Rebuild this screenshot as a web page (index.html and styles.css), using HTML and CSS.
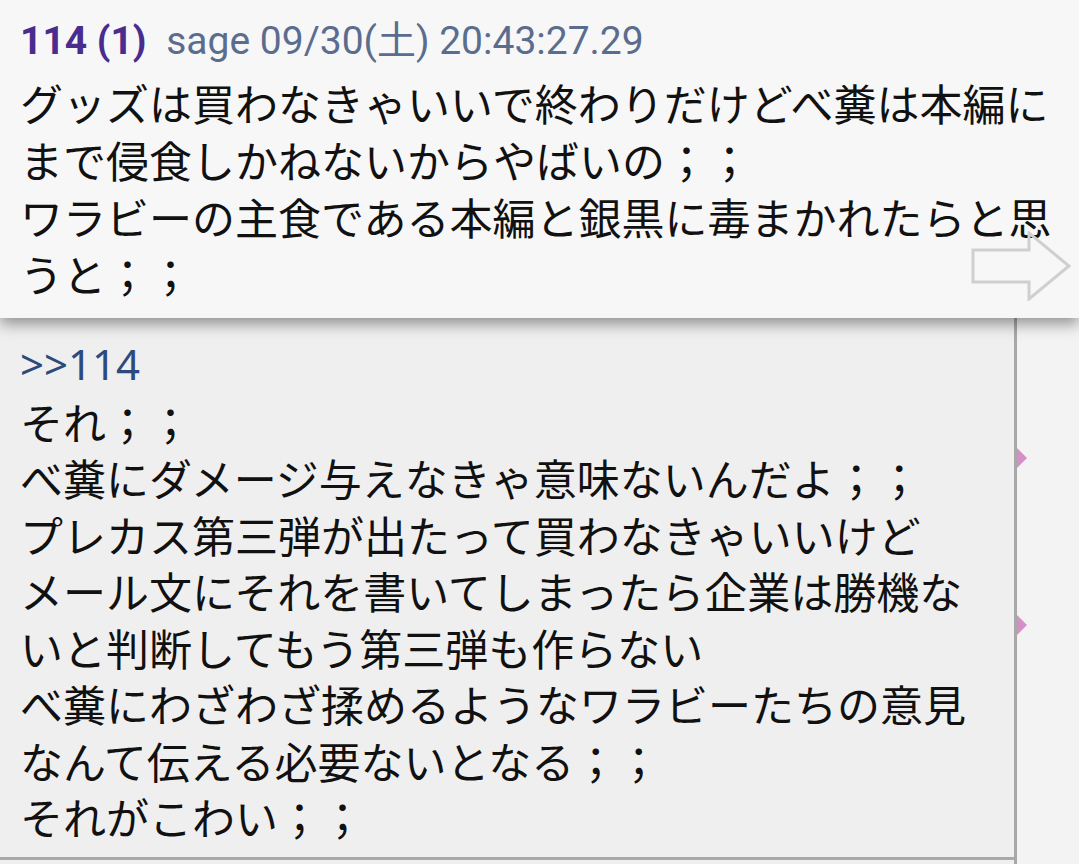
FILE: index.html
```html
<!DOCTYPE html>
<html lang="ja">
<head>
  <meta charset="UTF-8" />
  <meta name="viewport" content="width=device-width, initial-scale=1.0" />
  <title>レス 114</title>
  <link rel="stylesheet" href="styles.css">
</head>
<body>

  <!-- Thread -->
  <div class="thread">
    <div class="posts">
      <div class="post">
        <div class="post-head">115 sage 09/30(土) 20:44:03.51</div>
        <div class="post-body">
          <a class="anchor" href="#">&gt;&gt;114</a><br />
          それ；；<br />
          べ糞にダメージ与えなきゃ意味ないんだよ；；<br />
          プレカス第三弾が出たって買わなきゃいいけど<br />
          メール文にそれを書いてしまったら企業は勝機な<br />
          いと判断してもう第三弾も作らない<br />
          べ糞にわざわざ揉めるようなワラビーたちの意見<br />
          なんて伝える必要ないとなる；；<br />
          それがこわい；；
        </div>
      </div>
    </div>
    <div class="gutter">
      <span class="mark" style="top: 448px"></span>
      <span class="mark" style="top: 615px"></span>
    </div>
  </div>

  <!-- Popup -->
  <div class="popup">
    <div class="popup-head">
      <span class="num">114 (1)</span>
      <span class="meta">sage 09/30(土) 20:43:27.29</span>
    </div>
    <div class="popup-body">
      グッズは買わなきゃいいで終わりだけどべ糞は本編に<br />
      まで侵食しかねないからやばいの；；<br />
      ワラビーの主食である本編と銀黒に毒まかれたらと思<br />
      うと；；
    </div>
    <svg class="next" width="102" height="70" viewBox="0 0 102 70">
      <path d="M2 19 H58 V2 L98 35 L58 68 V51 H2 Z" fill="none" stroke="#cfcfcf" stroke-width="3" stroke-linejoin="miter" />
    </svg>
  </div>

</body>
</html>
```

FILE: styles.css
```css
body {
  margin: 0;
  width: 1079px;
  height: 864px;
  overflow: hidden;
  background: #f0f0f0;
  font-family: "Noto Sans CJK JP", "Noto Sans", sans-serif;
  color: #111;
}

/* Thread */
.thread {
  display: flex;
  height: 864px;
}
.posts {
  width: 1014px;
  background: #efefef;
}
.post {
  padding-top: 268px;
  border-bottom: 3px solid #a9a9a9;
}
.post-head {
  font-family: Roboto, "Noto Sans CJK JP", sans-serif;
  font-size: 38px;
  line-height: 50px;
  padding-left: 90px;
  color: #2f3f5f;
}
.post-body {
  padding: 15px 0 12px 20px;
  font-size: 43px;
  line-height: 56.5px;
  white-space: nowrap;
}
.anchor {
  font-family: "Noto Sans", Roboto, sans-serif;
  font-size: 42px;
  color: #2d4a7c;
  text-decoration: none;
}
.gutter {
  flex: 1;
  position: relative;
  border-left: 3px solid #a8a8a8;
  background: #f3f3f3;
}
.mark {
  position: absolute;
  left: 0;
  width: 0;
  height: 0;
  border-top: 10px solid transparent;
  border-bottom: 10px solid transparent;
  border-left: 10px solid #d58fc6;
}

/* Popup */
.popup {
  position: absolute;
  top: 0;
  left: 0;
  right: 0;
  height: 318px;
  background: #f7f7f7;
  box-shadow: 0 6px 14px rgba(0, 0, 0, 0.4);
}
.popup-head {
  padding: 16px 0 0 20px;
  height: 50px;
  font-family: Roboto, "Noto Sans CJK JP", sans-serif;
  font-size: 39px;
  line-height: 50px;
  white-space: nowrap;
}
.popup-head .num {
  font-weight: bold;
  color: #4a2b8e;
  margin-right: 10px;
}
.popup-head .meta {
  color: #5a6d8e;
}
.popup-body {
  padding: 8px 0 0 20px;
  font-size: 43px;
  line-height: 57px;
  white-space: nowrap;
}
.next {
  position: absolute;
  left: 971px;
  top: 231px;
}
```
